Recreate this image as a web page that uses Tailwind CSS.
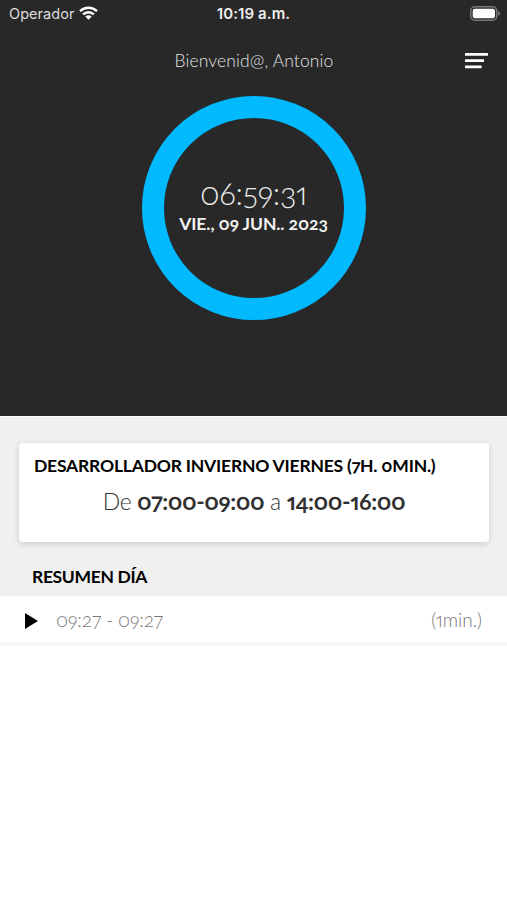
<!DOCTYPE html>
<html lang="es">
<head>
<meta charset="utf-8">
<title>Resumen día</title>
<script src="https://cdn.jsdelivr.net/npm/@tailwindcss/browser@4"></script>
</head>
<body class="w-[507px] h-[900px] overflow-hidden bg-white font-['Lato',sans-serif] [font-feature-settings:'onum','pnum'] whitespace-nowrap">
<header class="h-[416px] bg-[#282828] text-white flex flex-col">
  <div class="h-[28px] grid grid-cols-3 items-center font-['Inter',sans-serif] [font-feature-settings:normal] text-[15px] leading-[28px]">
    <div class="flex items-center gap-[5px] pl-[9px] text-[#dedede]">
      <span class="text-[14.5px] tracking-[0.05px]">Operador</span>
      <svg class="w-[19px] h-[14px] -mt-[2px]" viewBox="0 0 19 14" fill="none" stroke="#fff" stroke-width="2.5"><path d="M1 5.2a12.2 12.2 0 0 1 17 0M4.1 8.3a7.8 7.8 0 0 1 10.8 0"/><path d="M9.5 13.8 6.3 10.6a4.6 4.6 0 0 1 6.4 0z" fill="#fff" stroke="none"/></svg>
    </div>
    <div class="text-center font-semibold text-[#eee] tracking-[0.1px]">10:19 a.m.</div>
    <div class="flex justify-end pr-[6px] -mt-[2px]">
      <svg class="w-[31px] h-[15px]" viewBox="0 0 31 15"><rect x=".75" y=".75" width="26" height="13.5" rx="4.2" fill="#282828" stroke="#777" stroke-width="1.5"/><rect x="2.7" y="2.7" width="22.3" height="9.6" rx="2.2" fill="#fff"/><path d="M28.2 5v5q2-1 2-2.5t-2-2.5" fill="#777"/></svg>
    </div>
  </div>
  <div class="h-[68px] grid grid-cols-[1fr_auto_1fr] items-center">
    <span></span>
    <span class="text-[17.5px] font-light text-[#e0e0e0] tracking-[0.12px] -mt-[1px] pl-[1px]">Bienvenid@, Antonio</span>
    <div class="flex justify-end pr-[19px] -mt-[2px]">
      <svg class="w-[23px] h-[16px]" viewBox="0 0 23 16" fill="#fff"><rect width="23" height="2.8" rx=".6"/><rect y="6.3" width="19" height="2.8" rx=".6"/><rect y="12.4" width="16.7" height="2.8" rx=".6"/></svg>
    </div>
  </div>
  <div class="size-[224px] mx-auto rounded-full border-[22px] border-[#00b9ff] flex flex-col items-center pt-[57px]">
    <div class="h-[39px] leading-[36px] text-[31px] font-light text-[#eee] tracking-[-0.35px]">06:59:31</div>
    <div class="h-[20px] leading-[20px] text-[17.5px] font-bold text-[#f2f2f2] tracking-[-0.08px]">VIE., 09 JUN.. 2023</div>
  </div>
</header>
<main>
  <section class="h-[180px] bg-[#f0f0f0] border-t border-white pt-[26px]">
    <div class="ml-[19px] mr-[18px] h-[99px] rounded-[4px] bg-white shadow-[0_2px_6px_rgba(0,0,0,0.15)] pt-[12px] text-black">
      <h1 class="pl-[15px] leading-[22px] text-[17.5px] font-bold tracking-[-0.2px]">DESARROLLADOR INVIERNO VIERNES (7H. 0MIN.)</h1>
      <p class="pt-[9px] leading-[30px] text-center text-[23px] font-light text-[#333] tracking-[-0.42px]">De <b class="font-bold text-[#303030]">07:00-09:00</b> a <b class="font-bold text-[#303030]">14:00-16:00</b></p>
    </div>
    <h2 class="mt-[24px] pl-[32px] leading-[22px] text-[17.5px] font-bold text-black tracking-[-0.35px]">RESUMEN DÍA</h2>
  </section>
  <div class="h-[50px] border-b-[4px] border-[#f7f7f7] flex items-center pl-[25px] pr-[25px] text-[19px] font-light text-[#777]">
    <svg class="w-[13px] h-[16px] mr-[18px] mt-[3px]" viewBox="0 0 13 16"><path d="M0 0 13 8 0 16z"/></svg>
    <span class="tracking-[-0.12px] mt-[3px]">09:27 - 09:27</span>
    <span class="ml-auto mt-[3px]">(1min.)</span>
  </div>
</main>
</body>
</html>
